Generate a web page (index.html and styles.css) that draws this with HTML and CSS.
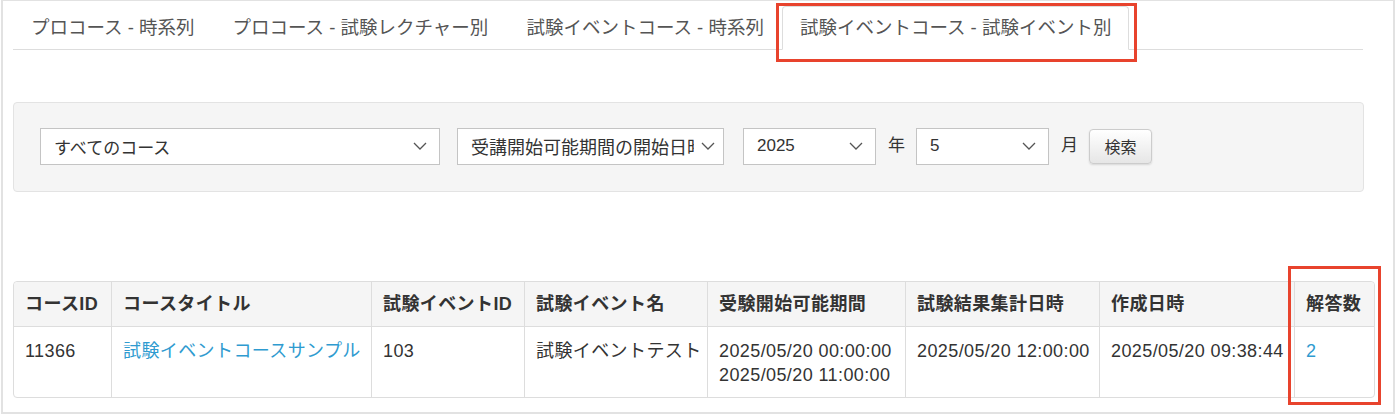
FILE: index.html
```html
<!DOCTYPE html>
<html lang="ja">
<head>
  <meta charset="UTF-8">
  <title>試験イベントコース - 試験イベント別</title>
  <link rel="stylesheet" href="styles.css">
</head>
<body>
  <div class="frame">
    <ul class="tabs">
      <li><a href="#">プロコース - 時系列</a></li>
      <li><a href="#">プロコース - 試験レクチャー別</a></li>
      <li><a href="#">試験イベントコース - 時系列</a></li>
      <li class="active"><a href="#">試験イベントコース - 試験イベント別</a></li>
    </ul>

    <div class="filter">
      <div class="select select-course">
        <span class="select-text">すべてのコース</span>
        <svg class="chevron" viewBox="0 0 14 8"><path d="M1 1l6 6 6-6"/></svg>
      </div>
      <div class="select select-period">
        <span class="select-text">受講開始可能期間の開始日時</span>
        <svg class="chevron" viewBox="0 0 14 8"><path d="M1 1l6 6 6-6"/></svg>
      </div>
      <div class="select select-num">
        <span class="select-text">2025</span>
        <svg class="chevron" viewBox="0 0 14 8"><path d="M1 1l6 6 6-6"/></svg>
      </div>
      <span class="unit">年</span>
      <div class="select select-num">
        <span class="select-text">5</span>
        <svg class="chevron" viewBox="0 0 14 8"><path d="M1 1l6 6 6-6"/></svg>
      </div>
      <span class="unit">月</span>
      <button type="button" class="btn">検索</button>
    </div>

    <div class="table-wrap">
      <table class="results">
        <colgroup>
          <col class="c-id">
          <col class="c-title">
          <col class="c-eid">
          <col class="c-ename">
          <col class="c-period">
          <col class="c-result">
          <col class="c-created">
          <col>
        </colgroup>
        <thead>
          <tr>
            <th>コースID</th>
            <th>コースタイトル</th>
            <th>試験イベントID</th>
            <th>試験イベント名</th>
            <th>受験開始可能期間</th>
            <th>試験結果集計日時</th>
            <th>作成日時</th>
            <th>解答数</th>
          </tr>
        </thead>
        <tbody>
          <tr>
            <td>11366</td>
            <td><a href="#">試験イベントコースサンプル</a></td>
            <td>103</td>
            <td>試験イベントテスト</td>
            <td>2025/05/20 00:00:00<br>2025/05/20 11:00:00</td>
            <td>2025/05/20 12:00:00</td>
            <td>2025/05/20 09:38:44</td>
            <td><a href="#">2</a></td>
          </tr>
        </tbody>
      </table>
      <span class="mark mark-col"></span>
    </div>
  </div>
</body>
</html>
```

FILE: styles.css
```css
body {
  margin: 0;
  font-family: "Liberation Sans", "Noto Sans CJK JP", sans-serif;
  color: #333;
  background: #fff;
}

/* outer frame of the screenshot */
.frame {
  box-sizing: border-box;
  width: 1394px;
  height: 414px;
  margin-left: 1px;
  border: 2px solid #e2e2e2;
  border-top-width: 1px;
  padding: 0 0 0 10px;
}

/* tabs */
.tabs {
  list-style: none;
  margin: 5px 0 0;
  padding: 0;
  width: 1350px;
  display: flex;
  border-bottom: 1px solid #ddd;
}
.tabs li {
  margin-right: 2px;
  margin-bottom: -1px;
}
.tabs a {
  display: block;
  height: 44px;
  box-sizing: border-box;
  padding: 0 17px;
  line-height: 42px;
  font-size: 18.5px;
  color: #555;
  text-decoration: none;
  border: 1px solid transparent;
  border-radius: 4px 4px 0 0;
}
.tabs li.active {
  position: relative;
  margin-left: -2px;
}
.tabs li.active a {
  background: #fff;
  border-color: #ddd;
  border-bottom-color: #fff;
}
/* red annotation box */
.tabs li.active::after {
  content: "";
  position: absolute;
  top: -3px;
  left: -6px;
  right: -8px;
  bottom: -12px;
  border: 3px solid #e8432d;
  pointer-events: none;
}

/* filter panel */
.filter {
  box-sizing: border-box;
  width: 1351px;
  margin-top: 52px;
  height: 90px;
  padding: 0 0 0 26px;
  background: #f5f5f5;
  border: 1px solid #e3e3e3;
  border-radius: 4px;
  display: flex;
  align-items: center;
}
.select {
  box-sizing: border-box;
  height: 37px;
  background: #fff;
  border: 1px solid #c4c4c4;
  display: flex;
  align-items: center;
  padding: 0 12px 0 13px;
  font-size: 17px;
  color: #333;
  margin-top: -2px;
}
.select-text {
  flex: 1;
  white-space: nowrap;
  overflow: hidden;
}
.chevron {
  width: 14px;
  height: 8px;
  fill: none;
  stroke: #555;
  stroke-width: 1.3;
  margin-left: 8px;
}
.select-course { width: 400px; margin-right: 17px; }
.select-period { width: 267px; margin-right: 19px; font-size: 18px; padding-right: 8px; }
.select-period .chevron { margin-left: 7px; }
.select-num { width: 133px; }
.unit {
  font-size: 17px;
  color: #333;
  margin: -8px 11px 0 12px;
}
.btn {
  height: 35px;
  width: 63px;
  padding: 0;
  font-family: inherit;
  font-size: 16px;
  color: #333;
  border: 1px solid #ccc;
  border-radius: 4px;
  background: linear-gradient(#fff, #e6e6e6);
  box-shadow: 0 1px 2px rgba(0, 0, 0, 0.12);
  margin-top: -2px;
}

/* results table */
.table-wrap {
  position: relative;
  margin-top: 89px;
  width: 1362px;
}
.results {
  width: 1362px;
  table-layout: fixed;
  border-collapse: separate;
  border-spacing: 0;
  border: 1px solid #ddd;
  border-radius: 4px;
  font-size: 18px;
  letter-spacing: 0.4px;
}
.c-id { width: 97px; }
.c-title { width: 260px; }
.c-eid { width: 153px; }
.c-ename { width: 183px; }
.c-period { width: 198px; }
.c-result { width: 194px; }
.c-created { width: 195px; }
.results th,
.results td {
  text-align: left;
  vertical-align: top;
  line-height: 24px;
  padding: 12px 12px 10px 11px;
  border-left: 1px solid #ddd;
  white-space: nowrap;
}
.results th:first-child,
.results td:first-child {
  border-left: none;
}
.results th {
  background: #f5f5f5;
  font-weight: bold;
  color: #333;
  padding: 10px 12px 10px 11px;
  border-bottom: 1px solid #ddd;
}
.results thead th:first-child { border-top-left-radius: 4px; }
.results thead th:last-child { border-top-right-radius: 4px; }
.results a {
  color: #2f9bd0;
  text-decoration: none;
}
.results td {
  height: 47px;
}
.mark-col {
  position: absolute;
  top: -15px;
  left: 1275px;
  width: 87px;
  height: 133px;
  border: 3px solid #e8432d;
}
```
